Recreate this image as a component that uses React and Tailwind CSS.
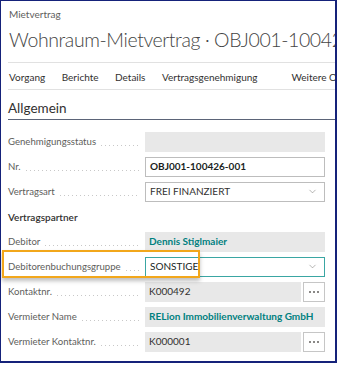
import { ChevronDown } from "lucide-react";

const font = { fontFamily: 'Lato, "Open Sans", Arial, sans-serif' };

const Dots = () => (
  <div className="flex-1 h-px mt-[7px] ml-[5px] bg-[linear-gradient(to_right,#c8c8c8_1px,transparent_1px)] bg-[length:4px_1px]" />
);

const Row = ({ label, children }) => (
  <div className="flex items-center h-[25px]">
    <div className="flex items-center w-[131px] mr-[6px] pt-[2px] text-[9.6px] text-[#605e5c] whitespace-nowrap">
      <span>{label}</span>
      <Dots />
    </div>
    <div className="flex w-[180px] h-[20px] gap-[2px]">{children}</div>
  </div>
);

const GrayField = ({ children, teal }) => (
  <div
    className={
      "flex-1 h-full bg-[#e8e8e8] flex items-center px-[4px] text-[10px] whitespace-nowrap overflow-hidden " +
      (teal ? "font-bold text-[#00807f]" : "text-[#323130]")
    }
  >
    {children}
  </div>
);

const DotsButton = () => (
  <div className="w-[22px] h-full border border-[#c6c6c6] bg-white flex items-center justify-center gap-[2px]">
    <span className="w-[2px] h-[2px] bg-[#8a8886]" />
    <span className="w-[2px] h-[2px] bg-[#8a8886]" />
    <span className="w-[2px] h-[2px] bg-[#8a8886]" />
  </div>
);

const MenuItem = ({ children }) => <span className="text-[10px] text-[#323130]">{children}</span>;

export default function App() {
  return (
    <div className="w-[339px] h-[365px] bg-white" style={font}>
      <div className="relative w-[337px] h-[363px] border-l border-t border-r-2 border-b-2 border-[#15227a] overflow-hidden">
        {/* Header */}
        <div className="pl-[8px] pt-[7px] text-[10px] leading-[12px] text-[#605e5c]">Mietvertrag</div>
        <div className="pl-[8px] mt-[7px] text-[19.5px] leading-[26px] font-light tracking-[-0.4px] text-[#444] whitespace-nowrap">
          Wohnraum-Mietvertrag · OBJ001-100426-001
        </div>

        {/* Action bar */}
        <div className="ml-[7px] mt-[9px] border-t border-b border-[#e1e1e1] h-[28px] pt-[2px] flex items-center whitespace-nowrap">
          <div className="flex items-center gap-[16.5px] pl-[1px]">
            <MenuItem>Vorgang</MenuItem>
            <MenuItem>Berichte</MenuItem>
            <MenuItem>Details</MenuItem>
            <MenuItem>Vertragsgenehmigung</MenuItem>
          </div>
          <div className="w-px h-[16px] bg-[#c8c8c8] ml-[17px] mr-[17px]" />
          <MenuItem>Weitere Optionen</MenuItem>
        </div>

        {/* Section */}
        <div className="ml-[7px] mt-[9px] pb-[2px] border-b border-[#5b6478] text-[13.5px] leading-[18px] text-[#323130]">
          Allgemein
        </div>

        <div className="pl-[7px] pt-[9px]">
          <Row label="Genehmigungsstatus">
            <GrayField />
          </Row>
          <Row label="Nr.">
            <div className="flex-1 h-full border border-[#bdbdbd] bg-white flex items-center px-[4px] text-[10px] font-bold text-[#201f1e]">
              OBJ001-100426-001
            </div>
          </Row>
          <Row label="Vertragsart">
            <div className="flex-1 h-full border border-[#bdbdbd] bg-white flex items-center justify-between pl-[4px] pr-[6px] text-[10px] text-[#323130]">
              <span>FREI FINANZIERT</span>
              <ChevronDown size={11} strokeWidth={1} color="#605e5c" />
            </div>
          </Row>
          <div className="flex items-center h-[25px] pt-[1px] text-[10px] font-semibold text-[#323130]">Vertragspartner</div>
          <Row label="Debitor">
            <GrayField teal>Dennis Stiglmaier</GrayField>
          </Row>
          <div className="relative">
            <Row label="Debitorenbuchungsgruppe">
              <div className="flex-1 h-full border border-[#3aa6a3] bg-white flex items-center justify-between pl-[4px] pr-[6px] text-[10px] text-[#201f1e]">
                <span className="flex items-center">
                  SONSTIGE
                  <span className="w-px h-[11px] bg-black" />
                </span>
                <ChevronDown size={11} strokeWidth={1} color="#605e5c" />
              </div>
            </Row>
            <div className="absolute left-[-6px] top-[-4px] w-[198px] h-[28px] border-2 border-[#f2a71b] shadow-[0_3px_4px_rgba(0,0,0,0.25)]" />
          </div>
          <Row label="Kontaktnr.">
            <GrayField>K000492</GrayField>
            <DotsButton />
          </Row>
          <Row label="Vermieter Name">
            <GrayField teal>RELion Immobilienverwaltung GmbH</GrayField>
          </Row>
          <Row label="Vermieter Kontaktnr.">
            <GrayField>K000001</GrayField>
            <DotsButton />
          </Row>
        </div>
      </div>
    </div>
  );
}
